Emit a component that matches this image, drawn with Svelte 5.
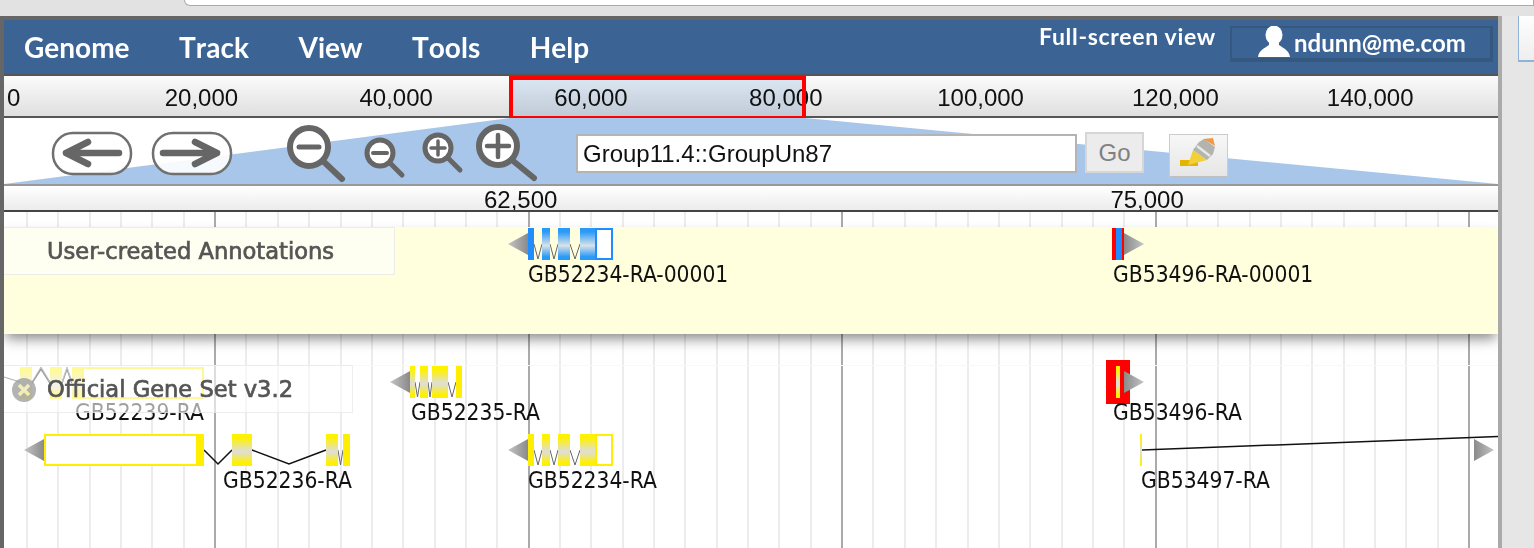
<script>
  const menus = ["Genome", "Track", "View", "Tools", "Help"];
  const overview = ["20,000", "40,000", "60,000", "80,000", "100,000", "120,000", "140,000"];

  // vertical grid of the track area, in page coordinates
  const gridLines = [];
  for (let i = 0; i < 48; i++) {
    const x = 26 + i * 31.35;
    gridLines.push({ x: x - 4, major: (i - 6) % 10 === 0 });
  }

  // transcript with four exons and a trailing UTR box, drawn twice
  function transcript(y, color) {
    return {
      color,
      y,
      solid: [[528, 6]],
      exons: [[542, 8], [558, 12], [580, 15]],
      utr: [[595, 18]],
      thin: [[534, 542], [550, 558], [570, 580]],
      thick: [],
      arrows: [[528, y + 16, -1]]
    };
  }

  const genes = [
    transcript(228, "blue"),
    {
      color: "yellow", y: 366,
      solid: [[456, 6]],
      exons: [[410, 5], [420, 8], [432, 16]],
      utr: [],
      thin: [[415, 420], [428, 432], [448, 456]],
      thick: [],
      arrows: [[410, 382, -1]]
    },
    {
      color: "yellow", y: 367,
      solid: [],
      exons: [[20, 12], [50, 12], [72, 10]],
      utr: [[82, 122]],
      thin: [],
      thick: [[32, 50, -1], [62, 72, -1]],
      arrows: []
    },
    {
      color: "yellow", y: 434,
      solid: [[198, 6], [343, 7]],
      exons: [[232, 20], [326, 12]],
      utr: [[44, 154]],
      thin: [[338, 343]],
      thick: [[204, 232, 1], [252, 326, 1]],
      arrows: [[44, 450, -1]]
    },
    transcript(434, "yellow")
  ];

  const names = [
    { text: "GB52234-RA-00001", x: 528, y: 262 },
    { text: "GB53496-RA-00001", x: 1113, y: 262 },
    { text: "GB52239-RA", x: 75, y: 400 },
    { text: "GB52235-RA", x: 411, y: 400 },
    { text: "GB53496-RA", x: 1113, y: 400 },
    { text: "GB52236-RA", x: 223, y: 468 },
    { text: "GB52234-RA", x: 528, y: 468 },
    { text: "GB53497-RA", x: 1141, y: 468 }
  ];
</script>

<div class="browser-top"><div class="tab"></div></div>

<div class="window">
  <main class="frame">
    <nav class="menubar">
      <div class="menus">
        {#each menus as m}
          <span>{m}</span>
        {/each}
      </div>
      <div class="account">
        <span class="fullscreen">Full-screen view</span>
        <div class="user">
          <svg width="34" height="32" viewBox="0 0 34 32">
            <ellipse cx="17" cy="9" rx="8.5" ry="9.5" fill="#fff" />
            <path d="M12 15 L12 19 C8 22 2 24 1 31 L33 31 C32 24 26 22 22 19 L22 15 Z" fill="#fff" />
          </svg>
          <span>ndunn@me.com</span>
        </div>
      </div>
    </nav>

    <div class="overview">
      <span class="zero">0</span>
      {#each overview as t}
        <span class="tick">{t}</span>
      {/each}
      <div class="highlight"></div>
    </div>

    <div class="navbox">
      <svg class="trapezoid" width="1494" height="66" viewBox="4 118 1494 66">
        <polygon points="4,184 510,118 805,118 1498,184" fill="#a8c6ea" />
      </svg>

      <svg class="icon pill" width="82" height="46" viewBox="0 0 82 46">
        <rect x="2" y="2" width="78" height="41" rx="20" fill="#fff" fill-opacity="0.9" stroke="#707070" stroke-width="2.5" />
        <path d="M68 22 H15 M37 11 L15 22 L37 33" fill="none" stroke="#666" stroke-width="6.5" stroke-linecap="round" stroke-linejoin="round" />
      </svg>
      <svg class="icon pill two" width="82" height="46" viewBox="0 0 82 46">
        <rect x="2" y="2" width="78" height="41" rx="20" fill="#fff" fill-opacity="0.9" stroke="#707070" stroke-width="2.5" />
        <path d="M12 22 H66 M44 11 L66 22 L44 33" fill="none" stroke="#666" stroke-width="6.5" stroke-linecap="round" stroke-linejoin="round" />
      </svg>

      <svg class="icon zoom-out-big" width="60" height="60" viewBox="0 0 60 60">
        <circle cx="23" cy="23" r="19" fill="#fff" stroke="#666" stroke-width="6" />
        <path d="M37 37 L56 55" stroke="#666" stroke-width="6" stroke-linecap="round" />
        <path d="M13 23 H33" stroke="#666" stroke-width="5" stroke-linecap="round" />
      </svg>
      <svg class="icon zoom-out-small" width="44" height="44" viewBox="0 0 44 44">
        <circle cx="16" cy="16" r="13" fill="#fff" stroke="#666" stroke-width="5" />
        <path d="M26 26 L38 38" stroke="#666" stroke-width="5" stroke-linecap="round" />
        <path d="M9 16 H23" stroke="#666" stroke-width="4" stroke-linecap="round" />
      </svg>
      <svg class="icon zoom-in-small" width="44" height="44" viewBox="0 0 44 44">
        <circle cx="16" cy="16" r="13" fill="#fff" stroke="#666" stroke-width="5" />
        <path d="M26 26 L38 38" stroke="#666" stroke-width="5" stroke-linecap="round" />
        <path d="M9 16 H23 M16 9 V23" stroke="#666" stroke-width="3.5" stroke-linecap="round" />
      </svg>
      <svg class="icon zoom-in-big" width="62" height="60" viewBox="0 0 62 60">
        <circle cx="23" cy="22" r="19" fill="#fff" stroke="#666" stroke-width="6" />
        <path d="M37 36 L59 54" stroke="#666" stroke-width="6" stroke-linecap="round" />
        <path d="M12 22 H34 M23 11 V33" stroke="#666" stroke-width="4.5" stroke-linecap="round" />
      </svg>

      <input class="search" value="Group11.4::GroupUn87" />
      <button class="go">Go</button>
      <button class="pencil" aria-label="Edit">
        <svg width="57" height="41" viewBox="1 1 57 41">
          <rect x="11" y="26" width="18" height="6" fill="#e3b400" />
          <path d="M19 31 L24 16 L38 26 Z" fill="#f3d038" />
          <path d="M24 16 L30 8 L35 5 L46 13 L44 20 L38 26 Z" fill="#b4b4ae" />
          <path d="M28 12 L41 22" stroke="#e8e8e4" stroke-width="2.5" />
          <path d="M34 5 L44 4 L46 12 L41 9 Z" fill="#ee9a4a" />
        </svg>
      </button>
    </div>

    <div class="ruler">
      <span>62,500</span>
      <span>75,000</span>
    </div>

    <div class="tracks">
      {#each gridLines as g}
        <div class="vline" class:major={g.major} style="left: {g.x}px"></div>
      {/each}

      <div class="annotation-band"></div>
      <div class="row-line"></div>

      <svg class="glyphs" width="1494" height="336" viewBox="4 212 1494 336">
        <defs>
          <linearGradient id="yellow" x1="0" y1="0" x2="0" y2="1">
            <stop offset="0" stop-color="#fff200" />
            <stop offset="0.12" stop-color="#fff200" />
            <stop offset="0.55" stop-color="#dedede" />
            <stop offset="0.9" stop-color="#fff000" />
            <stop offset="1" stop-color="#fff000" />
          </linearGradient>
          <linearGradient id="blue" x1="0" y1="0" x2="0" y2="1">
            <stop offset="0" stop-color="#2a9af8" />
            <stop offset="0.12" stop-color="#2a9af8" />
            <stop offset="0.55" stop-color="#d9e2e8" />
            <stop offset="0.9" stop-color="#2a9af8" />
            <stop offset="1" stop-color="#2a9af8" />
          </linearGradient>
          <linearGradient id="arrowL" x1="0" y1="0" x2="1" y2="0">
            <stop offset="0" stop-color="#c4c4c4" />
            <stop offset="1" stop-color="#8a8a8a" />
          </linearGradient>
          <linearGradient id="arrowR" x1="1" y1="0" x2="0" y2="0">
            <stop offset="0" stop-color="#c4c4c4" />
            <stop offset="1" stop-color="#8a8a8a" />
          </linearGradient>
        </defs>

        <rect x="1106" y="360" width="24" height="44" fill="#f00" />

        {#each genes as g}
          {@const solid = g.color === "blue" ? "#1f8cff" : "#ffee00"}
          {#each g.arrows as a}
            <polygon points="{a[0]},{a[1] - 11} {a[0] + 20 * a[2]},{a[1]} {a[0]},{a[1] + 11}" fill="url(#arrowL)" />
          {/each}
          {#each g.thin as t}
            <polyline points="{t[0]},{g.y + 16} {(t[0] + t[1]) / 2},{g.y + 31} {t[1]},{g.y + 16}" fill="none" stroke="#666" stroke-width="1" />
          {/each}
          {#each g.thick as t}
            <polyline points="{t[0]},{g.y + 16} {(t[0] + t[1]) / 2},{g.y + 16 + 14 * t[2]} {t[1]},{g.y + 16}" fill="none" stroke="#111" stroke-width="1.5" />
          {/each}
          {#each g.exons as e}
            <rect x={e[0]} y={g.y} width={e[1]} height="32" fill="url(#{g.color})" />
          {/each}
          {#each g.solid as e}
            <rect x={e[0]} y={g.y} width={e[1]} height="32" fill={solid} />
          {/each}
          {#each g.utr as e}
            <rect x={e[0] + 1} y={g.y + 1} width={e[1] - 2} height="30" fill="#fff" stroke={solid} stroke-width="2" />
          {/each}
        {/each}

        <!-- the two single-exon genes and the long intron -->
        <rect x="1112" y="228" width="12" height="32" fill="#f00" />
        <rect x="1116" y="228" width="6" height="32" fill="#1f8cff" />
        <polygon points="1124,233 1144,244 1124,255" fill="url(#arrowR)" />
        <rect x="1116" y="366" width="4" height="32" fill="url(#yellow)" />
        <polygon points="1124,371 1144,382 1124,393" fill="url(#arrowR)" />
        <rect x="1140" y="434" width="2" height="32" fill="url(#yellow)" />
        <path d="M1142 450 L1498 436.5" stroke="#111" stroke-width="1.5" />
        <polygon points="1474,439 1494,450 1474,461" fill="url(#arrowR)" />
        <polyline points="4,377 20,382" fill="none" stroke="#333" stroke-width="1" />
        <polyline points="32,382 41,367 50,382" fill="none" stroke="#555" stroke-width="1" />
        <polyline points="62,382 67,367 72,382" fill="none" stroke="#777" stroke-width="1" />
      </svg>

      {#each names as n}
        <div class="gene-name" style="left: {n.x - 4}px; top: {n.y - 212}px">{n.text}</div>
      {/each}

      <div class="track-label user">User-created Annotations</div>
      <div class="track-label official">
        <svg class="close" width="26" height="26" viewBox="0 0 26 26">
          <circle cx="13" cy="13" r="12" fill="#9a9a9a" fill-opacity="0.75" />
          <path d="M8 8 L18 18 M18 8 L8 18" stroke="#f2edb8" stroke-width="3.5" />
        </svg>
        Official Gene Set v3.2
      </div>
    </div>
  </main>

  <aside class="scrollbar">
    <div class="gutter"></div>
    <div class="side">
      <div class="side-panel"></div>
    </div>
  </aside>
</div>

<style>
  :global(body) {
    margin: 0;
    background: #c8c8c8;
    overflow: hidden;
  }
  .browser-top {
    height: 16px;
    background: #e2e2e2;
    position: relative;
  }
  .tab {
    margin-left: 184px;
    height: 5px;
    background: #fff;
    border: 1px solid #aaa;
    border-top: 0;
    border-radius: 0 0 0 6px;
  }
  .window {
    display: flex;
    height: 532px;
    overflow: hidden;
  }
  .frame {
    width: 1494px;
    flex: none;
    border-left: 4px solid #666;
    border-top: 4px solid #666;
    background: #fff;
  }
  .menubar {
    height: 54px;
    background: #3b6494;
    color: #fff;
    font-family: Lato, sans-serif;
    font-weight: 700;
    display: flex;
    justify-content: space-between;
    border-bottom: 2px solid #555;
  }
  .menus {
    display: flex;
    gap: 49.5px;
    padding: 7px 0 0 20px;
    font-size: 28px;
    line-height: 40px;
    font-kerning: none;
  }
  .account {
    display: flex;
    align-items: flex-start;
    gap: 14px;
    padding: 6px 5px 0 0;
  }
  .fullscreen {
    font-size: 23px;
    line-height: 24px;
    margin-top: -2px;
    letter-spacing: 0.7px;
  }
  .user {
    width: 263px;
    box-sizing: border-box;
    height: 36px;
    background: #3b6494;
    border: 2px solid #35587f;
    border-right-width: 3px;
    border-bottom-width: 4px;
    display: flex;
    align-items: flex-start;
    padding-left: 25px;
    font-size: 24px;
    line-height: 30px;
    gap: 3px;
  }
  .user svg {
    margin-top: -2px;
  }
  .overview {
    height: 40px;
    box-sizing: content-box;
    border-bottom: 2px solid #555;
    background: linear-gradient(#fbfbfb, #dfdfdf);
    font-family: "Liberation Sans", sans-serif;
    font-size: 24px;
    line-height: 44px;
    color: #111;
    display: flex;
    position: relative;
  }
  .zero {
    width: 100px;
    flex: none;
    padding-left: 3px;
    box-sizing: border-box;
  }
  .tick {
    width: 194.8px;
    flex: none;
    text-align: center;
  }
  .highlight {
    position: absolute;
    left: 505px;
    top: 0;
    width: 297px;
    height: 44px;
    box-sizing: border-box;
    border: 4px solid #f00;
  }
  .highlight::before {
    content: "";
    position: absolute;
    inset: 0;
    background: linear-gradient(#e0ecf9, #dce8f5);
    mix-blend-mode: multiply;
  }
  .navbox {
    height: 66px;
    border-bottom: 2px solid #999;
    position: relative;
    display: flex;
    align-items: flex-start;
    background: #fff;
  }
  .trapezoid {
    position: absolute;
    left: 0;
    top: 0;
  }
  .icon,
  .search,
  .go,
  .pencil {
    position: relative;
    flex: none;
  }
  .pill {
    margin: 13px 0 0 47px;
  }
  .pill.two {
    margin-left: 18px;
  }
  .zoom-out-big {
    margin: 6px 0 0 53px;
  }
  .zoom-out-small {
    margin: 19px 0 0 18px;
  }
  .zoom-in-small {
    margin: 14px 0 0 14px;
  }
  .zoom-in-big {
    margin: 6px 0 0 9px;
  }
  .search {
    width: 501px;
    height: 39px;
    box-sizing: border-box;
    margin: 16px 0 0 39px;
    border: 2px solid #b4b4b4;
    padding: 0 5px;
    font-family: "Liberation Sans", sans-serif;
    font-size: 24px;
    color: #111;
    background: #fff;
    outline: none;
  }
  .go {
    width: 59px;
    height: 41px;
    margin: 14px 0 0 8px;
    border: 2px solid #d6d6d6;
    background: #ececec;
    color: #808080;
    font-family: "Liberation Sans", sans-serif;
    font-size: 24px;
    padding: 0;
  }
  .pencil {
    width: 59px;
    height: 44px;
    margin: 16px 0 0 25px;
    border: 1px solid #ccc;
    border-bottom: 2px solid #c0c0c0;
    background: linear-gradient(#f7f7f7, #e6e6e6);
    padding: 0;
    display: flex;
  }
  .ruler {
    height: 24px;
    border-bottom: 2px solid #444;
    background: linear-gradient(#fff, #ececec);
    font-family: "Liberation Sans", sans-serif;
    font-size: 24px;
    line-height: 28px;
    color: #111;
    padding-left: 480px;
    display: flex;
    gap: 553px;
    overflow: hidden;
  }
  .tracks {
    position: relative;
    height: 336px;
    overflow: hidden;
    background: #fff;
  }
  .vline {
    position: absolute;
    top: 0;
    bottom: 0;
    width: 2px;
    background: #ececec;
  }
  .vline.major {
    background: #aaa;
  }
  .annotation-band {
    position: relative;
    margin-top: 15px;
    height: 107px;
    background: #ffffdd;
    box-shadow: 0 7px 12px -2px rgba(0, 0, 0, 0.45);
  }
  .row-line {
    position: relative;
    margin-top: 31px;
    height: 1px;
    background: #f8f8f8;
  }
  .glyphs {
    position: absolute;
    left: 0;
    top: 0;
  }
  .gene-name {
    position: absolute;
    font-family: "DejaVu Sans", sans-serif;
    font-stretch: condensed;
    font-size: 22.6px;
    line-height: 24px;
    color: #111;
    white-space: nowrap;
  }
  .track-label {
    position: absolute;
    left: 0;
    box-sizing: border-box;
    height: 48px;
    padding-left: 43px;
    font-family: "DejaVu Sans", sans-serif;
    font-size: 22.6px;
    -webkit-text-stroke: 0.7px #555;
    line-height: 46px;
    color: #555;
    background: rgba(255, 255, 255, 0.6);
    border: 1px solid rgba(225, 225, 225, 0.6);
    border-left: 0;
    white-space: nowrap;
  }
  .track-label.user {
    top: 15px;
    width: 391px;
  }
  .track-label.official {
    top: 153px;
    width: 349px;
  }
  .close {
    position: absolute;
    left: 7px;
    top: 11px;
  }
  .scrollbar {
    flex: 1;
    display: flex;
  }
  .gutter {
    width: 4px;
    background: #aaa;
    flex: none;
  }
  .side {
    flex: 1;
    background: #e6e6e6;
    padding-left: 16px;
    margin-top: -5px;
  }
  .side-panel {
    height: 47px;
    margin-top: 1px;
    background: linear-gradient(#fff, #eee);
    border: 1px solid #8fb2d8;
    border-right: 0;
    border-bottom-width: 2px;
  }
</style>
